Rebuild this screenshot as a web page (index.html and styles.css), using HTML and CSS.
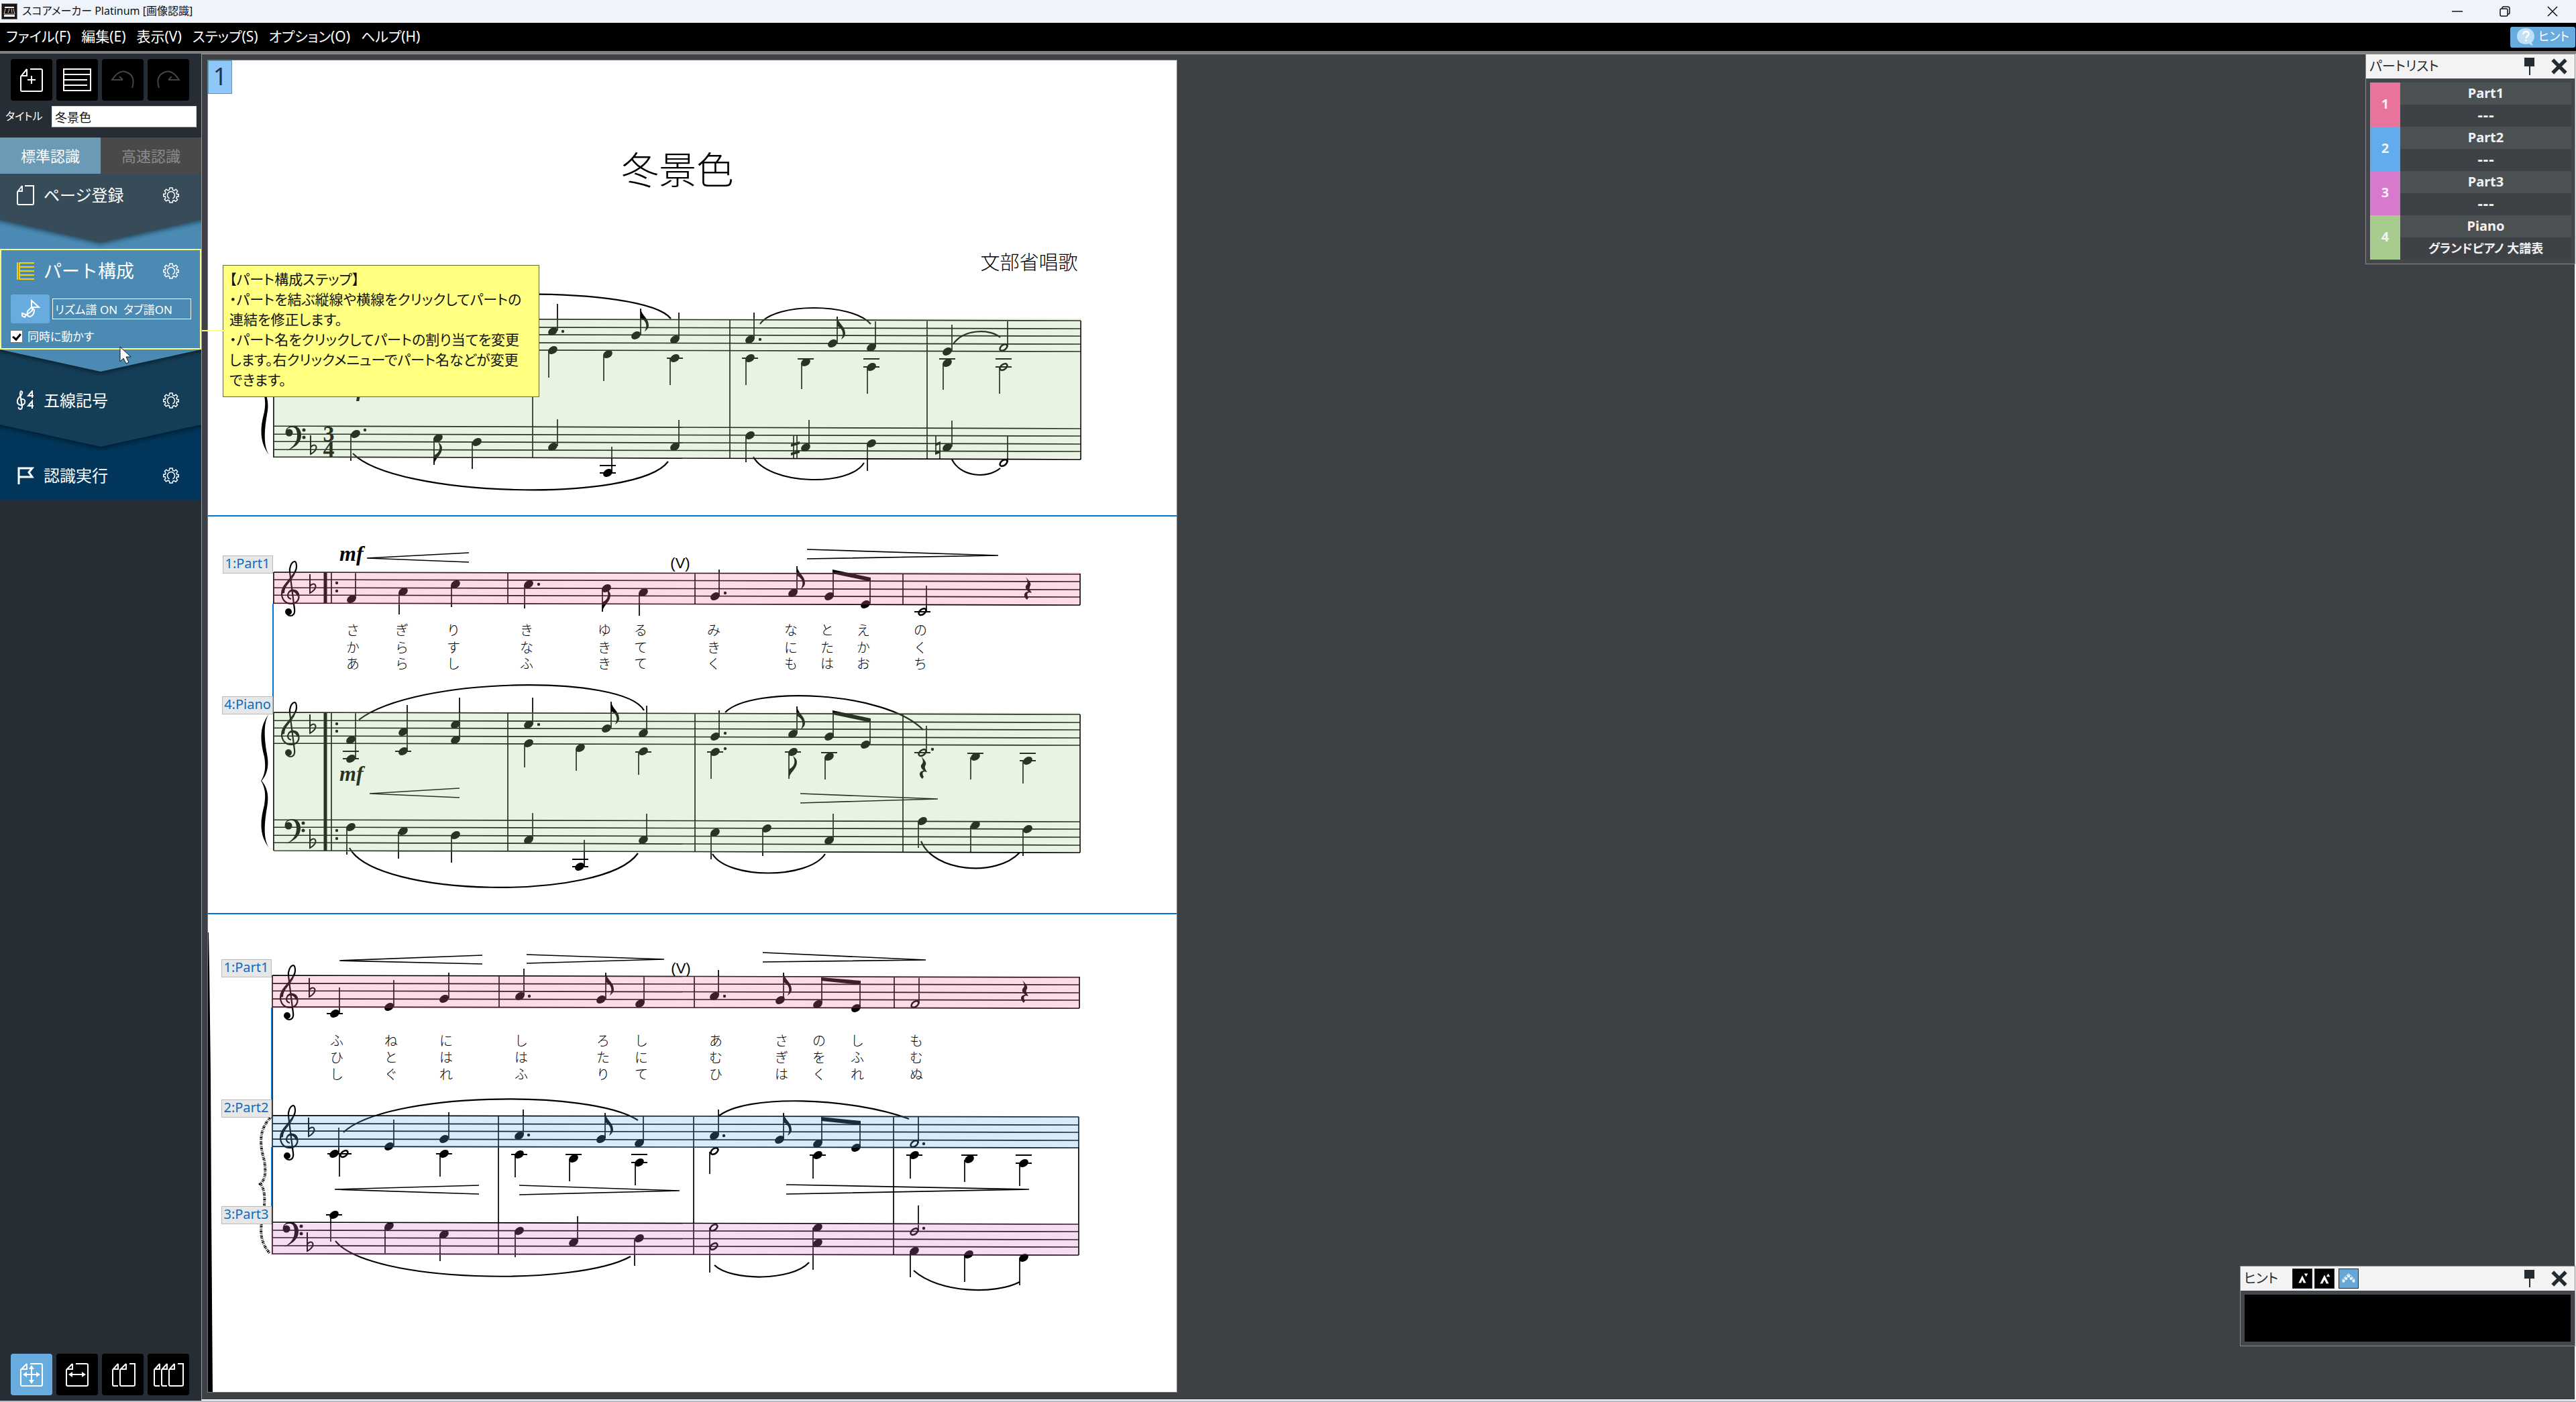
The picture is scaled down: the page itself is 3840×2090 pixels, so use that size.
FILE: index.html
```html
<!DOCTYPE html>
<html lang="ja">
<head>
<meta charset="utf-8">
<title>スコアメーカー Platinum [画像認識]</title>
<link rel="stylesheet" href="styles.css">
</head>
<body>
<svg class="defs" aria-hidden="true">
  <defs>
    <symbol id="gear" viewBox="0 0 24 24"><path d="M10 1h4l.6 3.2 2 .9L19.300 3.200l2.400 2.600-1.700 2.700.8 2H23.200v3.600h-2.500l-.8 2.100 1.600 2.500-2.500 2.500-2.500-1.500-2 .9L14 23h-4l-.6-3-2.100-.8-2.500 1.500-2.500-2.500L3.900 15.800l-.8-2H.8v-3.600h2.400l.8-2L2.400 5.600 4.900 3.200 7.400 5l2-.9z"/><path d="M9.500 17A5.500 5.500 0 1 1 14.500 17"/></symbol>
    <symbol id="pin" viewBox="0 0 16 28"><path d="M0 1h15v13H0zM7 14h2v13H7z" fill="#242b33"/></symbol>
    <symbol id="cross" viewBox="0 0 24 24"><path d="M3 3l18 18M21 3L3 21" stroke="#242b33" stroke-width="5"/></symbol>
  </defs>
</svg>

<header class="titlebar">
  <svg class="app-icon" viewBox="0 0 24 24"><path fill="#1d1412" stroke="#777" d="M.5.500h23v23H.5z"/><path d="M5 5h14v2H5zM4 17h16v3H4z" fill="#eee"/><path d="M6 8l-2 8h16l-2-8M12 8l-2 6M15 8l1 6" fill="none" stroke="#ccc"/></svg>
  <h1>スコアメーカー Platinum [画像認識]</h1>
  <div class="window-buttons">
    <button aria-label="最小化"><svg viewBox="0 0 16 16"><path d="M0 8h16"/></svg></button>
    <button aria-label="元に戻す"><svg viewBox="0 0 16 16"><rect x="1" y="4" width="11" height="11" rx="2"/><path d="M4 4V3q0-2 2-2h6q3 0 3 3v6q0 2-2 2h-1"/></svg></button>
    <button aria-label="閉じる"><svg viewBox="0 0 16 16"><path d="M1 1l14 14M15 1L1 15"/></svg></button>
  </div>
</header>

<nav class="menubar">
  <button>ファイル(F)</button><button>編集(E)</button><button>表示(V)</button><button>ステップ(S)</button><button>オプション(O)</button><button>ヘルプ(H)</button>
  <button class="hint-toggle"><svg viewBox="0 0 28 28"><path d="M14 1C6 1 1 6 1 13s5 12 13 12q3 0 5-1 3 3 6 3-2-3-2-5 4-3 4-9C27 6 22 1 14 1z" fill="#bfe0f6"/><path d="M10.500 10q0-4 4-4t4 3.500q0 2-2 3.500-2 1-2 3M14.500 18v2.500" fill="none" stroke="#fff" stroke-width="2.500"/></svg>ヒント</button>
</nav>

<div class="body">
  <aside class="sidebar">
    <div class="tools">
      <button aria-label="新規ページ"><svg viewBox="0 0 62 62"><path d="M24 15l-9 11v20q0 2 2 2h28q2 0 2-2V17q0-2-2-2H29M24 15v10h-9M31 25v12M25 31h12"/></svg></button>
      <button aria-label="一覧"><svg viewBox="0 0 62 62"><path d="M11 15h40v32H11zM11 23h40M11 31h35M11 39h35"/></svg></button>
      <button aria-label="元に戻す" class="off"><svg viewBox="0 0 62 62"><path d="M31 31H15q10-15 20-12 16 5 10 24M31 31l-5-5"/></svg></button>
      <button aria-label="やり直し" class="off"><svg viewBox="0 0 62 62"><path d="M31 31h16q-10-15-20-12-16 5-10 24M31 31l5-5"/></svg></button>
    </div>
    <div class="title-field"><label for="title">タイトル</label><input id="title" value="冬景色"></div>
    <div class="tabs"><button class="on">標準認識</button><button>高速認識</button></div>

    <section class="step step-page">
      <svg class="step-icon" viewBox="0 0 28 30"><path d="M9 1L2 10v17q0 2 2 2h20q2 0 2-2V1H13M9 1v8H2"/></svg>
      <h2>ページ登録</h2><button aria-label="ページ登録の設定"><svg><use href="#gear"/></svg></button>
    </section>
    <svg class="chevron to-part" viewBox="0 0 300 44" preserveAspectRatio="none"><path d="M-20-8H320L300 0 150 34 0 0z" fill="#374b59"/></svg>
    <section class="part-step">
      <div class="step">
        <svg class="step-icon" viewBox="0 0 28 30"><path d="M2 2v26M5 2v26M5 3h22M5 9h22M5 15h22M5 21h22M5 27h22" stroke="#f5cf12"/></svg>
        <h2>パート構成</h2><button aria-label="パート構成の設定"><svg><use href="#gear"/></svg></button>
      </div>
      <div class="rhythm">
        <button aria-label="楽器"><svg viewBox="0 0 58 43"><path d="M31 9l11 10H31zM32 19v5l-9 7M31 19l-6 6q-2 8 4 8 6-2 6-10zM17 28l6 2-2 4-4-2z"/></svg></button>
        <input aria-label="譜の種類" value="リズム譜 ON&#160; タブ譜ON">
      </div>
      <label class="together"><input type="checkbox" checked>同時に動かす</label>
    </section>
    <svg class="chevron to-staff" viewBox="0 0 300 44" preserveAspectRatio="none"><path d="M-20-8H320L300 0 150 33 0 0z" fill="#4a8ab3"/></svg>
    <section class="step step-staff">
      <svg class="step-icon" viewBox="0 0 28 30"><path d="M8 17q-2-4 1-4 5 0 4 5-1 4-6 4-6-1-5-7 1-4 5-7 3-4 2-6-3-3-3 4l3 18q0 4-3 4-3-1-2-3M24 11V1l-6 7h8M24 27V16l-6 7h8"/></svg>
      <h2>五線記号</h2><button aria-label="五線記号の設定"><svg><use href="#gear"/></svg></button>
    </section>
    <svg class="chevron to-run" viewBox="0 0 300 44" preserveAspectRatio="none"><path d="M-20-8H320L300 0 150 33 0 0z" fill="#143e58"/></svg>
    <section class="step step-run">
      <svg class="step-icon" viewBox="0 0 28 30"><path d="M4 28V4h20l-5 6 5 7H4" stroke-width="3"/></svg>
      <h2>認識実行</h2><button aria-label="認識実行の設定"><svg><use href="#gear"/></svg></button>
    </section>

    <div class="tools views">
      <button aria-label="全体表示" class="on"><svg viewBox="0 0 62 62"><path d="M24 15l-9 9v22q0 2 2 2h28q2 0 2-2V17q0-2-2-2H29M24 15v8h-9"/><path d="M31 22v18M22 31h18" /><path class="solid" d="M31 17l4 6h-8zM31 45l4-6h-8zM18 31l6-4v8zM44 31l-6-4v8z"/></svg></button>
      <button aria-label="幅に合わせる"><svg viewBox="0 0 62 62"><path d="M24 15l-9 9v22q0 2 2 2h28q2 0 2-2V17q0-2-2-2H29M24 15v8h-9M22 31h18"/><path class="solid" d="M18 31l6-4v8zM44 31l-6-4v8z"/></svg></button>
      <button aria-label="2ページ"><svg viewBox="0 0 62 62"><path d="M24 15l-8 9v22q0 2 2 2h6M24 15v8h-8M36 15l-9 9v22q0 2 2 2h18q2 0 2-2V15h-8M36 15v8h-9"/></svg></button>
      <button aria-label="3ページ"><svg viewBox="0 0 62 62"><path d="M18 15l-8 9v22q0 2 2 2h6M18 15v8h-8M29 15l-8 9v22q0 2 2 2h6M29 15v8h-8M40 15l-8 9v22q0 2 2 2h17q2 0 2-2V15h-8M40 15v8h-8"/></svg></button>
    </div>
    <svg class="cursor" viewBox="0 0 18 27"><path d="M1 1v22l5-5 4 8 4-2-4-8h7z" fill="#fff" stroke="#111"/></svg>
  </aside>

  <main class="workspace">
    <div class="sheet">
    <svg class="score" viewBox="310 90 1444 1985" role="img" aria-label="楽譜">
      <defs>
        <ellipse id="h" rx="7.400" ry="5.300" transform="rotate(-32)" fill="#000"/>
        <ellipse id="w" rx="6.200" ry="3.800" transform="rotate(-38)" fill="none" stroke="#000" stroke-width="2.600"/>
        <path id="l" d="M-12 0h24" stroke="#000" stroke-width="2"/>
        <circle id="d" r="2.200"/>
        <path id="fd" d="M0 0C1 10 12 14 12 25 12 29 9 32 6 34 9 28 11 20 0 14z"/>
        <path id="fu" d="M0 0C1-10 12-14 12-25 12-29 9-32 6-34 9-28 11-20 0-14z"/>
        <path id="flat" d="M0-20V8C6 5 10 0 8-4 6-7 2-5 0-2" fill="none" stroke="#000" stroke-width="2"/>
        <path id="rest" d="M-3 0C0 4 6 9 4 13 1 18 4 20 6 24 1 22-3 24 1 31L-1 34C-8 28-5 22 1 22-3 18-5 15-1 11 1 8-1 4-3 0z"/>
        <g id="treble"><path d="M0 6C-5 5-6 0-4-3-1-9 9-9 11-1 13 7 8 13 0 13-9 13-14 6-14-2-14-12-6-18-1-25 4-31 8-36 8-42 8-48 7-50 5-50 0-49-3-40-2-34L5 21C6 29 2 31-1 31-4 31-7 29-7 25" fill="none" stroke="#000" stroke-width="2.200"/><path d="M-14-2C-13-12-4-19 2-27L6-36 5-30C0-20-10-14-10-3zM-4-3C-1-10 9-10 12-1L9 2C7-5 1-7-4-3z"/><circle cx="-4" cy="25" r="5"/></g>
        <g id="bass"><circle cy="-2" r="5.500"/><path d="M-5-2C-6-9 0-12 6-12 14-12 18-6 18 2 18 13 8 21-4 25 7 19 12 12 12 2 12-5 10-10 5-10 0-10-3-8-3-6z"/><circle cx="22" cy="-6" r="2.500"/><circle cx="22" cy="5" r="2.500"/></g>
        <path id="brace" d="M14 0C-6 22 1 50 5 66 8 84 5 94 0 102 5 110 8 120 5 138 1 154-6 182 14 204 4 194 4 170 9 142 13 122 8 110 1 102 8 94 13 82 9 62 4 34 4 10 14 0z"/>
      </defs>
      <path d="M311 1390L312 1440 314 1600 315 1800 317 2075H310V1390z"/>

      <g class="mincho">
        <text x="1010" y="274" font-size="56" text-anchor="middle">冬景色</text>
        <text x="1534" y="402" font-size="29" text-anchor="middle">文部省唱歌</text>
        <text class="lyric" x="526 599 676 785 901 955 1064 1179 1233 1287 1372" y="947">さぎりきゆるみなとえの</text>
        <text class="lyric" x="526 599 676 785 901 955 1064 1179 1233 1287 1372" y="973">からすなきてきにたかく</text>
        <text class="lyric" x="526 599 676 785 901 955 1064 1179 1233 1287 1372" y="997">あらしふきてくもはおち</text>
        <text class="lyric" x="502 583 665 777 899 956 1067 1165 1221 1278 1366" y="1559">ふねにしろしあさのしも</text>
        <text class="lyric" x="502 583 665 777 899 956 1067 1165 1221 1278 1366" y="1584">ひとははたにむぎをふむ</text>
        <text class="lyric" x="502 583 665 777 899 956 1067 1165 1221 1278 1366" y="1609">しぐれふりてひはくれぬ</text>
        <text class="breath" x="1014" y="847">(V)</text><text class="breath" x="1015" y="1451">(V)</text>
      </g>
      <g class="dyn"><text x="506" y="591">mf</text><text x="506" y="836">mf</text><text x="506" y="1164">mf</text></g>
      <g class="meter"><text x="490" y="658">3</text><text x="490" y="681">4</text></g>

      <!-- first system: piano -->
      <path class="ln" d="M408 475L1611 478M408 487L1611 490M408 498L1611 501M408 510L1611 513M408 521L1611 524M408 635L1611 639M408 647L1611 650M408 658L1611 662M408 670L1611 673M408 681L1611 685
        M408 475V682M794 476V683M1088 477V684M1382 478V684M1611 478V685"/>
      <use href="#brace" x="389" y="476"/><use href="#bass" x="431" y="647"/><use href="#flat" x="463" y="669"/>
      <path class="ln" d="M523 647V687M647 653V693M704 659V699M831 665V625M912 704V666M1012 665V626M1112 650V689M1206 666V626M1293 662V702M1419 666V627M1502 689V650
        M831 493V453M955 499V460M1012 505V466M818 523V563M900 529V568M999 535V574M1124 505V466M1248 511V472M1305 517V479M1112 535V574M1195 541V580M1293 548V587M1419 523V484M1502 517V479M1406 542V581M1490 548V587
        M1183 650V684M1188 649V683M1395 650V675M1401 659V684"/>
      <path d="M1179 662l13-4v4l-13 4zM1179 675l13-4v4l-13 4zM1394 661l8-3v4l-8 3zM1394 674l8-3v4l-8 3z"/>
      <g><use href="#h" x="530" y="647"/><use href="#h" x="653" y="653"/><use href="#h" x="711" y="659"/><use href="#h" x="824" y="666"/><use href="#h" x="906" y="705"/><use href="#h" x="1006" y="666"/><use href="#h" x="1118" y="649"/><use href="#h" x="1201" y="667"/><use href="#h" x="1299" y="661"/><use href="#h" x="1412" y="667"/><use href="#w" x="1496" y="690"/>
      <use href="#h" x="824" y="494"/><use href="#h" x="948" y="500"/><use href="#h" x="1006" y="506"/><use href="#h" x="824" y="522"/><use href="#h" x="906" y="528"/><use href="#h" x="1006" y="534"/><use href="#h" x="1118" y="506"/><use href="#h" x="1241" y="512"/><use href="#h" x="1299" y="518"/><use href="#h" x="1118" y="534"/><use href="#h" x="1201" y="540"/><use href="#h" x="1299" y="547"/><use href="#h" x="1412" y="524"/><use href="#h" x="1412" y="541"/><use href="#w" x="1496" y="518"/><use href="#w" x="1496" y="547"/>
      <use href="#d" x="544" y="641"/><use href="#d" x="839" y="494"/><use href="#d" x="1133" y="506"/>
      <use href="#l" x="906" y="694"/><use href="#l" x="906" y="705"/><use href="#l" x="1006" y="534"/><use href="#l" x="1118" y="534"/><use href="#l" x="1201" y="535"/><use href="#l" x="1299" y="535"/><use href="#l" x="1299" y="547"/><use href="#l" x="1412" y="535"/><use href="#l" x="1496" y="535"/><use href="#l" x="1496" y="547"/>
      <use href="#fu" x="647" y="693"/><use href="#fd" x="955" y="460"/><use href="#fd" x="1248" y="472"/></g>
      <path class="slur" d="M526 676C590 742 950 750 996 688M1123 681C1145 722 1265 727 1288 690M1419 685C1432 710 1470 715 1491 698M526 476C600 428 960 424 1000 475M1133 483C1155 451 1270 451 1298 483M1421 513C1435 491 1475 489 1491 503"/>

      <!-- second system: voice -->
      <path class="ln" d="M408 853L1610 856M408 864L1610 867M408 876L1610 879M408 887L1610 890M408 899L1610 902
        M408 853V900M494 853V899M757 854V900M1036 855V901M1346 855V901M1610 855V902
        M530 892V853M595 883V916M673 872V905M782 872V907M898 878V912M953 884V918M1072 888V849M1188 883V844M1242 888V850M1297 900V862M1381 911V873"/>
      <path class="thick" d="M485 853V900M485 1062V1268"/>
      <path d="M1241 849L1298 861V867L1241 855zM1241 1059L1298 1071V1077L1241 1065z"/>
      <g><use href="#treble" x="434" y="887"/><use href="#flat" x="462" y="876"/>
      <use href="#h" x="524" y="893"/><use href="#h" x="601" y="882"/><use href="#h" x="679" y="871"/><use href="#h" x="788" y="871"/><use href="#h" x="904" y="877"/><use href="#h" x="959" y="883"/><use href="#h" x="1066" y="889"/><use href="#h" x="1182" y="884"/><use href="#h" x="1236" y="889"/><use href="#h" x="1290" y="901"/><use href="#w" x="1375" y="912"/><use href="#l" x="1375" y="912"/>
      <use href="#d" x="502" y="869"/><use href="#d" x="502" y="881"/><use href="#d" x="803" y="871"/><use href="#d" x="1081" y="884"/><use href="#fu" x="898" y="912"/><use href="#fd" x="1188" y="844"/><use href="#rest" x="1532" y="860"/></g>
      <path class="pin" d="M699 824L547 832 699 838M1203 819L1488 828 1203 833M685 1175L551 1183 685 1189M1193 1183L1398 1191 1193 1197"/>

      <!-- second system: piano -->
      <path class="ln" d="M408 1062L1610 1065M408 1074L1610 1077M408 1085L1610 1088M408 1097L1610 1100M408 1108L1610 1111M408 1222L1610 1225M408 1233L1610 1236M408 1245L1610 1248M408 1256L1610 1260M408 1268L1610 1271
        M408 1062V1268M494 1062V1268M757 1063V1269M1036 1064V1270M1346 1065V1270M1610 1065V1271
        M530 1130V1063M607 1119V1051M685 1102V1040M794 1080V1040M911 1085V1046M964 1092V1052M782 1109V1144M859 1116V1149M952 1121V1155M1072 1098V1059M1188 1093V1053M1242 1098V1060M1297 1109V1072M1060 1122V1161M1176 1122V1161M1230 1129V1162M1381 1121V1082M1447 1129V1162M1525 1135V1168
        M517 1234V1274M594 1240V1280M673 1246V1286M794 1251V1212M871 1291V1252M964 1251V1213M1060 1242V1281M1137 1236V1276M1242 1253V1213M1369 1225V1264M1447 1231V1270M1525 1237V1276"/>
      <g><use href="#brace" x="389" y="1062"/><use href="#treble" x="434" y="1097"/><use href="#flat" x="462" y="1085"/><use href="#bass" x="430" y="1233"/><use href="#flat" x="462" y="1256"/>
      <use href="#d" x="502" y="1079"/><use href="#d" x="502" y="1090"/><use href="#d" x="502" y="1238"/><use href="#d" x="502" y="1250"/>
      <use href="#h" x="523" y="1103"/><use href="#h" x="523" y="1131"/><use href="#h" x="601" y="1091"/><use href="#h" x="601" y="1120"/><use href="#h" x="679" y="1080"/><use href="#h" x="679" y="1103"/><use href="#h" x="788" y="1080"/><use href="#h" x="904" y="1086"/><use href="#h" x="959" y="1093"/><use href="#h" x="788" y="1108"/><use href="#h" x="865" y="1115"/><use href="#h" x="959" y="1120"/><use href="#h" x="1066" y="1098"/><use href="#h" x="1182" y="1094"/><use href="#h" x="1236" y="1098"/><use href="#h" x="1290" y="1110"/><use href="#h" x="1066" y="1121"/><use href="#h" x="1182" y="1121"/><use href="#h" x="1236" y="1128"/><use href="#w" x="1375" y="1122"/><use href="#h" x="1454" y="1128"/><use href="#h" x="1532" y="1134"/>
      <use href="#l" x="523" y="1120"/><use href="#l" x="523" y="1131"/><use href="#l" x="601" y="1120"/><use href="#l" x="959" y="1121"/><use href="#l" x="1066" y="1121"/><use href="#l" x="1182" y="1121"/><use href="#l" x="1236" y="1122"/><use href="#l" x="1375" y="1122"/><use href="#l" x="1454" y="1123"/><use href="#l" x="1532" y="1123"/><use href="#l" x="1532" y="1134"/>
      <use href="#d" x="803" y="1080"/><use href="#d" x="1081" y="1093"/><use href="#d" x="1081" y="1116"/><use href="#d" x="1390" y="1117"/><use href="#fd" x="911" y="1046"/><use href="#fd" x="1188" y="1053"/><use href="#fu" x="1176" y="1161"/><use href="#rest" x="1376" y="1127"/>
      <use href="#h" x="523" y="1233"/><use href="#h" x="601" y="1239"/><use href="#h" x="679" y="1245"/><use href="#h" x="788" y="1252"/><use href="#h" x="864" y="1292"/><use href="#h" x="959" y="1252"/><use href="#h" x="1066" y="1241"/><use href="#h" x="1143" y="1235"/><use href="#h" x="1236" y="1253"/><use href="#h" x="1375" y="1224"/><use href="#h" x="1454" y="1230"/><use href="#h" x="1532" y="1236"/><use href="#l" x="865" y="1281"/><use href="#l" x="865" y="1292"/></g>
      <path class="slur" d="M535 1073C620 1008 930 1005 960 1059M1081 1062C1120 1022 1320 1030 1376 1088M521 1264C560 1338 900 1344 951 1272M1062 1273C1085 1311 1205 1311 1230 1273M1373 1254C1392 1300 1485 1308 1520 1271"/>

      <!-- third system -->
      <path class="ln" d="M406 1454L1609 1457M406 1466L1609 1468M406 1477L1609 1480M406 1489L1609 1491M406 1501L1609 1503
        M406 1663L1608 1665M406 1675L1608 1677M406 1686L1608 1688M406 1698L1608 1700M406 1709L1608 1711
        M405 1822L1608 1825M405 1834L1608 1836M405 1845L1608 1848M405 1857L1608 1859M405 1869L1608 1871
        M406 1454V1869M744 1455V1502M1035 1456V1502M1333 1456V1503M1609 1456V1503M743 1664V1870M1034 1664V1870M1332 1665V1870M1608 1665V1871
        M506 1510V1472M587 1500V1461M669 1488V1450M781 1484V1444M903 1490V1450M960 1495V1456M1071 1484V1446M1168 1490V1450M1225 1496V1458M1282 1502V1463M1370 1496V1457
        M505 1719V1681M506 1721V1754M587 1708V1669M669 1697V1658M656 1721V1754M780 1692V1654M768 1721V1755M902 1697V1659M849 1728V1761M959 1703V1664M947 1734V1767M1071 1692V1654M1058 1717V1750M1168 1698V1659M1225 1704V1666M1212 1723V1757M1282 1710V1672M1369 1704V1665M1357 1723V1757M1438 1729V1762M1520 1735V1768
        M493 1812V1851M574 1829V1868M656 1840V1880M768 1835V1874M861 1851V1813M946 1847V1887M1058 1830V1897M1212 1830V1893M1369 1835V1797M1357 1865V1904M1438 1871V1911M1520 1876V1916"/>
      <path d="M1224 1457L1283 1462V1468L1224 1462zM1224 1665L1283 1671V1677L1224 1671z"/>
      <path d="M404 1665C384 1685 388 1710 394 1730 397 1750 395 1758 388 1765 395 1772 396 1790 392 1812 388 1830 386 1850 402 1868" fill="none" stroke="#000" stroke-width="4" stroke-dasharray="1 1 2 1 1 2"/>
      <g><use href="#treble" x="432" y="1489"/><use href="#flat" x="461" y="1478"/><use href="#treble" x="432" y="1698"/><use href="#flat" x="460" y="1686"/><use href="#bass" x="427" y="1834"/><use href="#flat" x="458" y="1857"/>
      <use href="#h" x="499" y="1511"/><use href="#l" x="499" y="1511"/><use href="#h" x="580" y="1501"/><use href="#h" x="662" y="1489"/><use href="#h" x="775" y="1485"/><use href="#h" x="896" y="1490"/><use href="#h" x="954" y="1496"/><use href="#h" x="1065" y="1485"/><use href="#h" x="1163" y="1491"/><use href="#h" x="1219" y="1497"/><use href="#h" x="1276" y="1503"/><use href="#w" x="1364" y="1497"/><use href="#d" x="789" y="1485"/><use href="#d" x="1080" y="1485"/><use href="#fd" x="903" y="1450"/><use href="#fd" x="1168" y="1450"/><use href="#rest" x="1527" y="1461"/>
      <use href="#h" x="498" y="1720"/><use href="#w" x="513" y="1720"/><use href="#l" x="500" y="1720"/><use href="#l" x="512" y="1720"/><use href="#h" x="580" y="1709"/><use href="#h" x="662" y="1698"/><use href="#h" x="662" y="1720"/><use href="#l" x="662" y="1720"/><use href="#h" x="774" y="1693"/><use href="#h" x="774" y="1721"/><use href="#l" x="774" y="1721"/><use href="#h" x="896" y="1698"/><use href="#h" x="855" y="1727"/><use href="#l" x="855" y="1721"/><use href="#h" x="953" y="1704"/><use href="#h" x="953" y="1733"/><use href="#l" x="953" y="1721"/><use href="#l" x="953" y="1733"/>
      <use href="#h" x="1065" y="1693"/><use href="#w" x="1065" y="1716"/><use href="#h" x="1162" y="1699"/><use href="#h" x="1219" y="1705"/><use href="#h" x="1219" y="1722"/><use href="#l" x="1219" y="1722"/><use href="#h" x="1276" y="1711"/><use href="#w" x="1363" y="1705"/><use href="#h" x="1363" y="1722"/><use href="#l" x="1363" y="1722"/><use href="#h" x="1445" y="1728"/><use href="#l" x="1445" y="1722"/><use href="#h" x="1526" y="1734"/><use href="#l" x="1526" y="1722"/><use href="#l" x="1526" y="1734"/>
      <use href="#d" x="788" y="1692"/><use href="#d" x="1079" y="1693"/><use href="#d" x="1377" y="1705"/><use href="#fd" x="902" y="1659"/><use href="#fd" x="1168" y="1659"/>
      <use href="#h" x="498" y="1811"/><use href="#l" x="498" y="1811"/><use href="#h" x="580" y="1828"/><use href="#h" x="662" y="1840"/><use href="#h" x="774" y="1835"/><use href="#h" x="855" y="1852"/><use href="#h" x="953" y="1846"/><use href="#w" x="1064" y="1830"/><use href="#w" x="1064" y="1858"/><use href="#h" x="1219" y="1830"/><use href="#h" x="1219" y="1853"/><use href="#w" x="1363" y="1836"/><use href="#d" x="1377" y="1831"/><use href="#h" x="1363" y="1865"/><use href="#h" x="1444" y="1870"/><use href="#h" x="1526" y="1875"/></g>
      <path class="slur" d="M512 1688C575 1628 880 1623 951 1670M1070 1665C1110 1630 1270 1636 1355 1668M500 1850C550 1913 860 1918 940 1873M1065 1886C1090 1910 1180 1910 1206 1882M1362 1894C1400 1928 1485 1930 1520 1911"/>
      <path class="pin" d="M719 1424L506 1432 719 1437M785 1423L990 1430 785 1436M1137 1420L1380 1431 1137 1434M714 1767L499 1773 714 1780M774 1767L1013 1775 774 1781M1172 1766L1534 1773 1172 1780"/>

      <!-- part colours over the staves -->
      <g opacity=".25">
        <path fill="#a5d095" d="M408 475H1611V683H408zM408 1062H1610V1270H408z"/>
        <path fill="#f778a0" d="M408 853H1610V901H408zM405 1455H1609V1503H405z"/>
        <path fill="#64aff0" d="M405 1664H1609V1711H405z"/>
        <path fill="#d978cd" d="M404 1824H1608V1871H404z"/>
      </g>
      <path d="M407 900V1063M405 1502V1664M405 1710V1823M310 769H1754M310 1362H1754" stroke="#0075d4" stroke-width="2" fill="none"/>
      <g class="tag"><rect x="332.500" y="828.500" width="74" height="26"/><text x="369" y="847">1:Part1</text>
      <rect x="331.500" y="1038.500" width="75" height="26"/><text x="369" y="1057">4:Piano</text>
      <rect x="330.500" y="1430.500" width="74" height="26"/><text x="367" y="1449">1:Part1</text>
      <rect x="330.500" y="1639.500" width="74" height="26"/><text x="367" y="1658">2:Part2</text>
      <rect x="330.500" y="1798.500" width="74" height="26"/><text x="367" y="1817">3:Part3</text></g>
    </svg>
    <span class="page-no">1</span>
    </div>

    <div class="tip">【パート構成ステップ】<br>・パートを結ぶ縦線や横線をクリックしてパートの<br>連結を修正します。<br>・パート名をクリックしてパートの割り当てを変更<br>します。右クリックメニューでパート名などが変更<br>できます。</div>

    <section class="panel parts">
      <header><h2>パートリスト</h2><button aria-label="固定"><svg class="i-pin"><use href="#pin"/></svg></button><button aria-label="閉じる"><svg class="i-x"><use href="#cross"/></svg></button></header>
      <table>
        <tbody><tr><th rowspan="2" class="p1">1</th><td>Part1</td></tr><tr><td class="none">---</td></tr></tbody>
        <tbody><tr><th rowspan="2" class="p2">2</th><td>Part2</td></tr><tr><td class="none">---</td></tr></tbody>
        <tbody><tr><th rowspan="2" class="p3">3</th><td>Part3</td></tr><tr><td class="none">---</td></tr></tbody>
        <tbody><tr><th rowspan="2" class="p4">4</th><td>Piano</td></tr><tr><td class="inst">グランドピアノ 大譜表</td></tr></tbody>
      </table>
    </section>

    <section class="panel hints">
      <header><h2>ヒント</h2>
        <div class="sizes"><button aria-label="文字を小さく"><svg viewBox="0 0 30 30"><path d="M9 22l6-12 6 12h-4l-2-5-2 5z"/><path d="M18 7h6l-3 5z"/></svg></button><button aria-label="文字を大きく"><svg viewBox="0 0 30 30"><path d="M8 23l7-14 7 14h-4l-3-6-3 6z"/><path d="M18 12h6l-3-5z"/></svg></button><button aria-label="吹き出し" class="on"><svg viewBox="0 0 30 30"><path d="M5 17L15 7l10 10" fill="none" stroke="#fff"/><path d="M13 9h4v4h-4zM9 13h4v4H9zM17 13h4v4h-4zM5 17h4v4H5zM21 17h4v4h-4z"/></svg></button></div>
        <button aria-label="固定"><svg class="i-pin"><use href="#pin"/></svg></button><button aria-label="閉じる"><svg class="i-x"><use href="#cross"/></svg></button></header>
      <div class="hint-body"></div>
    </section>
  </main>
</div>
</body>
</html>
```
FILE: styles.css
```css
* { box-sizing: border-box; }
body { margin: 0; height: 100vh; display: flex; flex-direction: column; overflow: hidden; background: #b6bac4; color: #fff; font: 18px/1.2 "Noto Sans", "Noto Sans CJK JP", sans-serif; font-feature-settings: "palt"; }
button, input { font: inherit; color: inherit; font-feature-settings: inherit; }
button { border: 0; padding: 0; background: none; display: flex; align-items: center; justify-content: center; white-space: nowrap; }
h1, h2 { margin: 0; font-weight: 400; white-space: nowrap; }
svg { display: block; }
.defs { position: absolute; width: 0; height: 0; }

.titlebar { flex: none; height: 34px; display: flex; align-items: center; gap: 7px; padding-left: 2px; background: #eff3fb; color: #111; }
.titlebar h1 { font-size: 16px; }
.app-icon { width: 24px; height: 24px; }
.window-buttons { margin-left: auto; display: flex; }
.window-buttons button { width: 71px; height: 32px; }
.window-buttons svg { width: 16px; height: 16px; fill: none; stroke: #111; stroke-width: 1.5; }

.menubar { flex: none; height: 46px; display: flex; align-items: center; gap: 16px; padding: 0 1px 0 9px; background: #000; border-bottom: 4px solid #808080; font-size: 21px; }
.hint-toggle { margin-left: auto; width: 97px; height: 31px; gap: 5px; background: #67abdf; border-radius: 3px; font-size: 18px; }
.hint-toggle svg { width: 28px; height: 28px; }

.body { flex: 1; min-height: 0; display: flex; margin-bottom: 2px; }
.sidebar { position: relative; flex: none; width: 300px; display: flex; flex-direction: column; background: #262d34; }
.tools { display: flex; gap: 6px; padding: 8px 16px; }
.tools button { width: 62px; height: 62px; background: #000; border-radius: 4px; }
.tools .on { background: #67abdf; }
.tools svg { width: 62px; height: 62px; fill: none; stroke: #fff; stroke-width: 2; }
.tools .solid { fill: #fff; stroke: none; }
.tools .off svg { stroke: #444; }
.views { margin-top: auto; }
.title-field { display: flex; align-items: center; justify-content: space-between; padding: 0 7px 15px 8px; font-size: 16px; }
.title-field input { width: 216px; height: 32px; padding: 0 4px; border: 1px solid #ddd; border-bottom-color: #888; background: #fff; color: #111; font-size: 18px; }
.tabs { display: flex; height: 54px; font-size: 22px; }
.tabs button { flex: 1; background: #494949; color: #8c8c8c; }
.tabs .on { background: #6b9ab6; color: #fff; }

.step { display: flex; align-items: center; height: 68px; padding: 0 33px 4px 24px; }
.step h2 { flex: 1; font-size: 24px; padding-left: 13px; font-feature-settings: normal; }
.step-icon { width: 28px; height: 30px; fill: none; stroke: #fff; stroke-width: 2; }
.step button svg { width: 24px; height: 24px; fill: none; stroke: #fff; stroke-width: 1.5; }
.step-page { background: #374b59; }
.step-staff { background: #143e58; }
.step-run { background: #01365a; }
.chevron { flex: none; width: 100%; height: 44px; overflow: hidden; }
.chevron path { filter: drop-shadow(0 3px 3px #0007); }
.to-part { background: #4a8ab3; }
.to-staff { background: #143e58; }
.to-run { background: #01365a; }
.part-step { height: 150px; background: #4a8ab3; border: 2px solid #ffff80; }
.part-step .step { height: 66px; padding: 0 31px 4px 22px; }
.part-step h2 { font-size: 27px; }
.rhythm { display: flex; align-items: center; gap: 4px; padding-left: 14px; }
.rhythm button { width: 58px; height: 43px; background: #67abdf; border-radius: 3px; }
.rhythm svg { width: 58px; height: 43px; fill: none; stroke: #fff; stroke-width: 2; }
.rhythm input { width: 207px; height: 31px; padding: 0 3px; background: none; border: 1px solid #fff; font-size: 17px; }
.together { display: flex; align-items: center; gap: 7px; padding: 10px 0 0 13px; font-size: 17px; line-height: 19px; }
.together input { appearance: none; width: 19px; height: 19px; margin: 0; background: #fff; border: 1px solid #777; }
.together input::after { content: ""; display: block; width: 5px; height: 9px; margin: 2px 0 0 5px; border: solid #000; border-width: 0 3px 3px 0; transform: rotate(40deg); }
.cursor { position: absolute; left: 178px; top: 436px; width: 18px; height: 27px; }

.workspace { position: relative; flex: 1; min-width: 0; padding: 9px 9px 11px; background: #3d4145; border: solid; border-width: 1px 2px 2px 1px; border-color: #999 #f4f4f4 #f4f4f4 #999; }
.sheet { position: relative; height: 100%; aspect-ratio: 1444 / 1985; background: #fff; outline: 1px solid #777; }
.score { width: 100%; height: 100%; }
.page-no { position: absolute; left: 0; top: 0; width: 36px; height: 50px; background: #8fc8f8; border: 1px solid #5b9bb5; color: #25323e; font-size: 36px; line-height: 46px; text-align: center; }
.ln { fill: none; stroke: #000; stroke-width: 1.7; }
.thick { stroke: #000; stroke-width: 5; }
.slur { fill: none; stroke: #000; stroke-width: 2.2; }
.pin { fill: none; stroke: #000; stroke-width: 1.7; }
.mincho { font-family: "Liberation Serif", "Noto Sans CJK JP", serif; font-weight: 300; }
.lyric { font-size: 20px; text-anchor: middle; font-feature-settings: normal; }
.breath { font-family: "Liberation Sans", sans-serif; font-size: 22px; text-anchor: middle; }
.dyn { font: italic bold 32px "Liberation Serif", serif; }
.meter { font: bold 34px "Liberation Serif", serif; text-anchor: middle; }
.tag rect { fill: #e7e7e7; stroke: #bbb; }
.tag text { fill: #0c6cc0; font-size: 20px; text-anchor: middle; }

.tip { position: absolute; left: 31px; top: 314px; width: 472px; height: 197px; padding: 5px 9px; background: #ffff80; border: 1px solid #666650; color: #111; font-size: 21px; line-height: 30px; white-space: nowrap; }
.tip::before { content: ""; position: absolute; left: -32px; top: 96px; width: 32px; height: 2px; background: #ffff80; }

.panel { position: absolute; right: -1px; background: #43474b; border: 1px solid #8a8a8a; }
.panel header { display: flex; align-items: center; height: 36px; padding: 0 10px 0 5px; background: #f3f3f3; color: #242b33; }
.panel h2 { font-size: 20px; }
.panel header > button:first-of-type { margin-left: auto; margin-right: 23px; }
.i-pin { width: 16px; height: 28px; }
.i-x { width: 26px; height: 26px; }
.parts { top: -1px; width: 313px; }
.parts table { width: 300px; margin: 6px; border-collapse: collapse; font-size: 20px; font-weight: 700; text-align: center; color: #f2f2f2; }
.parts th, .parts td { height: 33px; padding: 0 0 2px; line-height: 24px; }
.parts th { width: 45px; }
.parts td { background: #3e4145; }
.parts th + td { background: #4c5154; }
.parts .inst { font-size: 18px; }
.parts .none { font-family: "DejaVu Sans", sans-serif; }
.p1 { background: #e8749c; }
.p2 { background: #62abec; }
.p3 { background: #d779cc; }
.p4 { background: #a7cc8e; }
.hints { bottom: 79px; width: 500px; }
.sizes { display: flex; gap: 3px; margin-left: 21px; }
.sizes button { width: 30px; height: 30px; background: #000; border: 1px solid #242b33; }
.sizes .on { margin-left: 3px; background: #67a7d8; }
.sizes svg { width: 28px; height: 28px; fill: #fff; }
.hint-body { height: 70px; margin: 6px; background: #000; }
```
